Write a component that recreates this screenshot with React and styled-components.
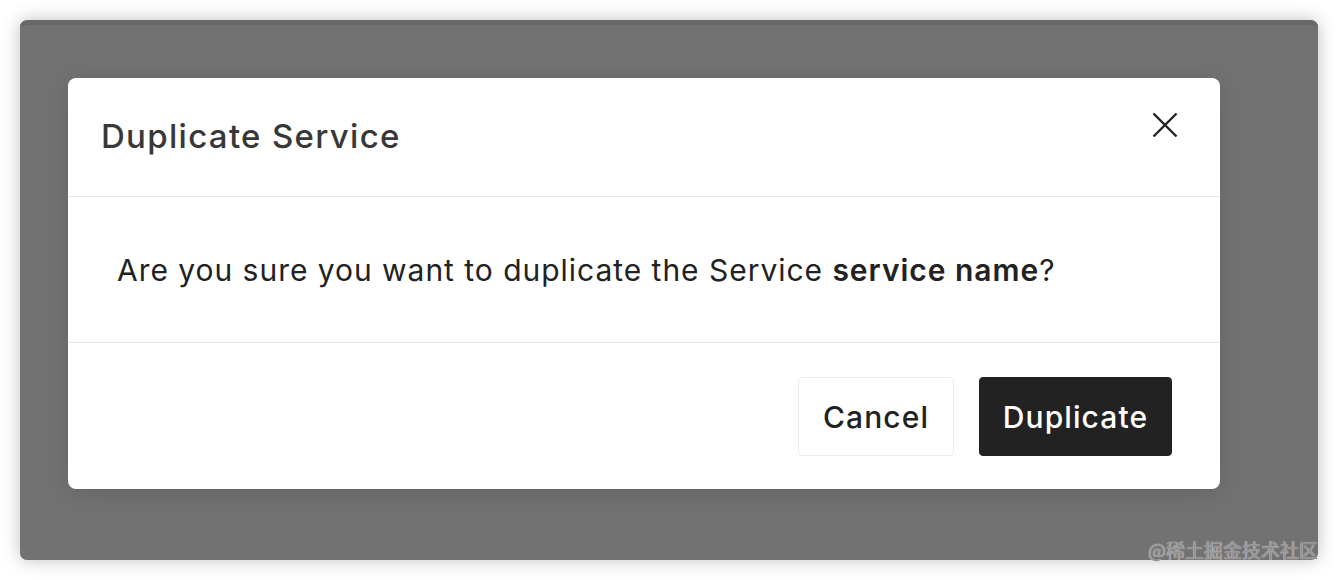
import styled, { createGlobalStyle } from "styled-components";

const Global = createGlobalStyle`
  html, body {
    margin: 0;
    background: #ffffff;
    font-family: Inter, "Noto Sans", sans-serif;
  }
`;

const Page = styled.div`
  padding: 20px;
  height: 580px;
  box-sizing: border-box;
  position: relative;
`;

const Backdrop = styled.div`
  height: 540px;
  box-sizing: border-box;
  background: #727272;
  border-radius: 7px;
  border-top: 1px solid #6a6a6a;
  box-shadow: 0 0 18px rgba(0, 0, 0, 0.25), inset 0 12px 0 -8px #686868;
  padding: 57px 0 0 48px;
`;

const Modal = styled.div`
  width: 1152px;
  background: #ffffff;
  border-radius: 8px;
  box-shadow: 0 4px 24px rgba(0, 0, 0, 0.12);
  display: flex;
  flex-direction: column;
`;

const Header = styled.div`
  height: 118px;
  display: flex;
  justify-content: space-between;
  align-items: flex-start;
  padding: 0 42px 0 33px;
  border-bottom: 1px solid #e6e6e6;
`;

const Title = styled.h2`
  margin: 38px 0 0;
  font-size: 33px;
  font-weight: 500;
  color: #383838;
  letter-spacing: 1.3px;
`;

const Close = styled.button`
  margin-top: 34px;
  border: none;
  background: none;
  padding: 0;
  width: 26px;
  height: 26px;
  display: flex;
  align-items: center;
  justify-content: center;
  color: #222222;
  cursor: pointer;
`;

const Body = styled.div`
  height: 145px;
  display: flex;
  align-items: center;
  padding: 0 49px;
  border-bottom: 1px solid #e6e6e6;
  font-size: 30px;
  color: #222222;
  letter-spacing: 0.97px;

  strong {
    font-weight: 600;
  }
`;

const Footer = styled.div`
  display: flex;
  justify-content: flex-end;
  gap: 25px;
  padding: 34px 48px 33px;
`;

const Button = styled.button`
  height: 79px;
  padding: 0;
  border-radius: 4px;
  font-family: Inter, "Noto Sans", sans-serif;
  font-size: 30px;
  font-weight: 500;
  letter-spacing: 1.1px;
  cursor: pointer;
  border: 1px solid ${(p) => (p.primary ? "#222222" : "#ebebeb")};
  background: ${(p) => (p.primary ? "#222222" : "#ffffff")};
  color: ${(p) => (p.primary ? "#ffffff" : "#222222")};
  width: ${(p) => (p.primary ? "193px" : "156px")};
`;

const Watermark = styled.span`
  position: absolute;
  right: 20px;
  bottom: 17px;
  font-family: "Noto Sans CJK SC", sans-serif;
  font-size: 19px;
  color: #909090;
  text-shadow: 0 0 1px #ffffff;
`;

export default function App() {
  return (
    <Page>
      <Global />
      <Backdrop>
        <Modal>
          <Header>
            <Title>Duplicate Service</Title>
            <Close aria-label="Close">
              <svg width="26" height="26" viewBox="0 0 26 26" fill="none">
                <path d="M1.5 1.5L24.5 24.5M24.5 1.5L1.5 24.5" stroke="currentColor" strokeWidth="2.4" />
              </svg>
            </Close>
          </Header>
          <Body>
            <span>
              Are you sure you want to duplicate the Service <strong>service name</strong>?
            </span>
          </Body>
          <Footer>
            <Button>Cancel</Button>
            <Button primary>Duplicate</Button>
          </Footer>
        </Modal>
      </Backdrop>
      <Watermark>@稀土掘金技术社区</Watermark>
    </Page>
  );
}
